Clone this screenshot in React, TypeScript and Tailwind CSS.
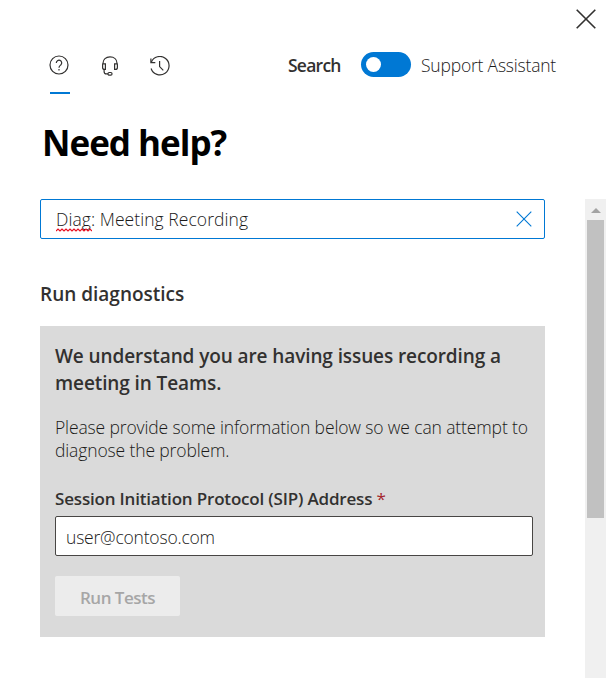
import type { ReactNode } from 'react';

function Icon({ children, className }: { children: ReactNode; className: string }) {
  return (
    <svg viewBox="0 0 20 20" fill="none" stroke="currentColor" strokeWidth="1.2" className={className}>
      {children}
    </svg>
  );
}

function HelpTabs() {
  return (
    <nav className="flex h-[39px] gap-[30px]">
      <button className="flex w-5 flex-col items-start justify-between border-b-2 border-[#0078d4]" aria-label="Help">
        <Icon className="-ml-px size-5">
          <circle cx="10" cy="10" r="9" />
          <path d="M7.3 7.9a2.7 2.7 0 1 1 4.6 1.9c-.9.8-1.9 1.4-1.9 2.9" />
          <path d="M10 14v1.4" />
        </Icon>
      </button>
      <button className="flex w-5 items-start" aria-label="Contact support">
        <Icon className="mt-px size-5">
          <path d="M3 8V7.2C3 3.3 5.9.9 10 .9s7 2.4 7 6.3V8" />
          <path d="M5.4 7.800H3.400A.8.8 0 0 0 2.600 8.600v2.800A2 2 0 0 0 4.600 13.400h.8zM14.600 7.800H16.600a.8.8 0 0 1 .8.8v2.800a2 2 0 0 1-2 2h-.8z" />
          <path d="M4.100 13.500v1.900c0 1.600.9 2.500 2.300 2.500H8" />
          <rect x="8" y="16.500" width="4" height="2.700" rx="1.200" />
        </Icon>
      </button>
      <button className="flex w-5 items-start" aria-label="History">
        <Icon className="mt-px size-5">
          <path d="M1.300 6.300A9.200 9.200 0 1 1 1.100 12.500" />
          <path d="M.9 2.400v4.300h4.400" />
          <path d="M9.600 5v5.600l3.700 3.700" />
        </Icon>
      </button>
    </nav>
  );
}

export default function App() {
  return (
    <div className="flex h-[678px] w-[606px] flex-col overflow-hidden bg-white font-['Open_Sans','Noto_Sans',sans-serif] text-[#323130]">
      <div className="flex h-[55px] shrink-0 justify-end pt-[9px] pr-[10px]">
        <svg viewBox="0 0 20 20" className="size-5" fill="none" stroke="#323130" strokeWidth="1.6" aria-label="Close">
          <path d="M.7.7l18.600 18.600M19.300.7L.7 19.300" />
        </svg>
      </div>
      <header className="flex h-[64px] shrink-0 items-start justify-between pr-[50px] pl-[50px]">
        <HelpTabs />
        <div className="-mt-[3px] flex h-[25px] items-center">
          <span className="w-[73px] pt-px text-[17.500px] leading-6 font-semibold tracking-[-0.75px] whitespace-nowrap"><span>Search</span></span>
          <span className="flex h-[25px] w-[50px] items-center rounded-full bg-[#0078d4] pl-[5px]">
            <span className="size-[15px] rounded-full bg-white" />
          </span>
          <span className="ml-[10px] w-[135px] text-[17.500px] leading-6 font-light tracking-[-0.2px] whitespace-nowrap text-[#1b1a19]"><span>Support Assistant</span></span>
        </div>
      </header>
      <h1 className="h-[80px] shrink-0 pl-[42px] text-[35px] leading-[48px] font-bold tracking-[-1px] whitespace-nowrap text-black">
        <span>Need help?</span>
      </h1>
      <div className="flex min-h-0 grow justify-between pl-10">
        <main className="w-[505px]">
          <div className="flex h-10 items-center justify-between rounded-[2px] border border-[#0078d4] pr-[12px] pl-[15px]">
            <span className="relative text-[17.500px] leading-6 font-light tracking-[0.06px] whitespace-nowrap text-[#1b1a19]">
              Diag: Meeting Recording
              <svg viewBox="0 0 36 4" className="absolute -bottom-px left-0 h-1 w-9" fill="none" stroke="#e81123" strokeWidth="1.2">
                <path d="M0 3l2-2 2 2 2-2 2 2 2-2 2 2 2-2 2 2 2-2 2 2 2-2 2 2 2-2 2 2 2-2 2 2 2-2 2 2" />
              </svg>
            </span>
            <svg viewBox="0 0 16 16" className="mb-px size-4" fill="none" stroke="#0078d4" strokeWidth="1.1">
              <path d="M.7.7l14.600 14.600M15.300.7L.7 15.300" />
            </svg>
          </div>
          <h2 className="mt-[42px] h-[45px] text-[19px] leading-[26px] font-semibold whitespace-nowrap"><span>Run diagnostics</span></h2>
          <section className="h-[311px] bg-[#dadada] px-[15px] pt-[17px] pr-[12px]">
            <h3 className="text-[19px] leading-[27px] font-semibold tracking-[-0.1px] whitespace-nowrap">
              <span>We understand you are having issues recording a</span><br /><span>meeting in Teams.</span>
            </h3>
            <p className="mt-[19px] text-[17.500px] leading-[23px] font-light tracking-[-0.13px] whitespace-nowrap text-[#1b1a19]">
              <span>Please provide some information below so we can attempt to</span><br /><span>diagnose the problem.</span>
            </p>
            <div className="mt-[25px] h-[29px] text-[17px] leading-6 font-semibold tracking-[-0.18px] whitespace-nowrap">
              <span>Session Initiation Protocol (SIP) Address</span> <span className="font-normal text-[#a4262c]">*</span>
            </div>
            <div className="flex h-10 items-center rounded-[2px] border border-[#484644] bg-white pt-[2px] pl-[10px] text-[17.500px] leading-6 font-light tracking-[-0.2px] text-[#1b1a19]">
              <span>user@contoso.com</span>
            </div>
            <button className="mt-5 flex h-10 w-[125px] items-center justify-center rounded-[2px] bg-[#ececec] pt-[3px] text-[17px] font-semibold tracking-[-0.5px] text-[#a6a6a6]">
              <span>Run Tests</span>
            </button>
          </section>
        </main>
        <div className="flex w-[21px] flex-col items-center bg-[#f0f0f0]">
          <div className="flex h-[21px] items-center pt-[2px]">
            <svg viewBox="0 0 10 5" className="h-[5px] w-[10px]" fill="#a3a3a3"><path d="M5 0l5 5H0z" /></svg>
          </div>
          <div className="h-[298px] w-[17px] bg-[#c1c1c1]" />
        </div>
      </div>
    </div>
  );
}
